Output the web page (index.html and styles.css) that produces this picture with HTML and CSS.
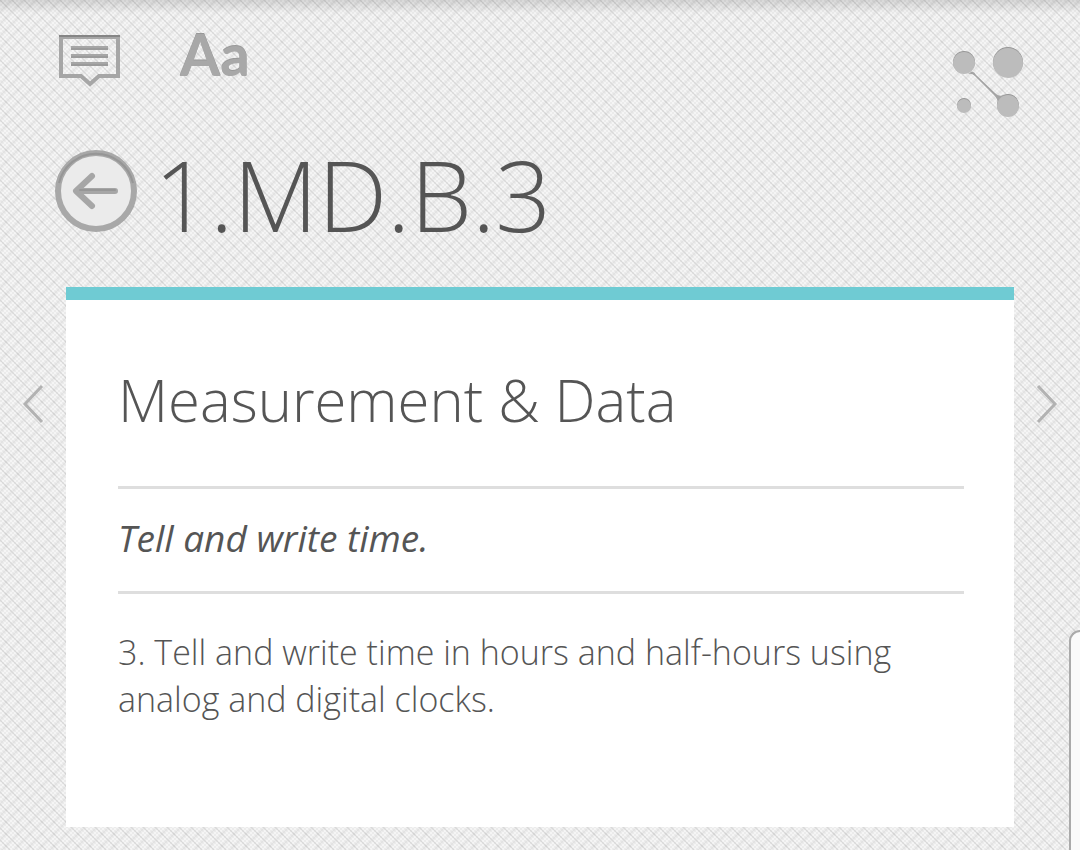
FILE: index.html
```html
<!DOCTYPE html>
<html lang="en">
<head>
  <meta charset="UTF-8">
  <meta name="viewport" content="width=device-width, initial-scale=1">
  <title>1.MD.B.3</title>
  <link rel="stylesheet" href="styles.css">
</head>
<body>
  <header class="toolbar">
    <button class="tool" aria-label="Notes">
      <svg width="62" height="54" viewBox="0 0 62 54" fill="none" stroke="#a6a6a6">
        <path d="M3 3H60V42H41L32 50L23 42H3Z" stroke-width="4"/>
        <path d="M1 2H62" stroke="#858585" stroke-width="2"/>
        <path d="M13 14H50M13 22H50M13 30H50" stroke-width="4"/>
        <path d="M13 15H50M13 23H50M13 31H50" stroke="#909090"/>
      </svg>
    </button>
    <button class="tool text-size" aria-label="Text size">Aa</button>
    <button class="tool share" aria-label="Share">
      <svg width="72" height="72" viewBox="0 0 72 72">
        <g fill="#969696">
          <circle cx="12" cy="15" r="11"/>
          <circle cx="56" cy="15" r="15"/>
          <circle cx="12" cy="58" r="7"/>
          <circle cx="56" cy="58" r="11"/>
        </g>
        <path d="M19 25Q22 24 24 28L43 46Q46 50 52 48L46 57Q46 52 42 48L23 29Q20 26 16 27Z" fill="#a4a4a4"/>
        <g fill="#bcbcbc">
          <circle cx="12" cy="16" r="11"/>
          <circle cx="56" cy="16" r="15"/>
          <circle cx="12" cy="59" r="7"/>
          <circle cx="56" cy="59" r="11"/>
        </g>
      </svg>
    </button>
  </header>

  <div class="title-row">
    <button class="back" aria-label="Back">
      <svg width="84" height="84" viewBox="0 0 84 84" fill="none">
        <circle cx="42" cy="42" r="38" fill="#ebebeb" stroke="#a8a8a8" stroke-width="6"/>
        <path d="M5 34A38 38 0 0 1 79 34" stroke="#969696" stroke-width="2"/>
        <g stroke-width="6" stroke-linecap="round" stroke-linejoin="round">
          <path d="M38 27L22 42L38 57M23 42H61" stroke="#a6a6a6"/>
          <path d="M26 41H61" stroke="#969696" stroke-width="2"/>
        </g>
      </svg>
    </button>
    <h1>1.MD.B.3</h1>
  </div>

  <main class="pager">
    <button class="arrow" aria-label="Previous">
      <svg width="22" height="40" viewBox="0 0 22 40" fill="none" stroke="#b2b2b2" stroke-width="3">
        <path d="M20 2L3 20L20 38"/>
      </svg>
    </button>
    <article class="card">
      <h2>Measurement &amp; Data</h2>
      <p class="cluster">Tell and write time.</p>
      <p class="standard">3. Tell and write time in hours and half-hours using analog and digital clocks.</p>
    </article>
    <button class="arrow" aria-label="Next">
      <svg width="22" height="40" viewBox="0 0 22 40" fill="none" stroke="#b2b2b2" stroke-width="3">
        <path d="M2 2L19 20L2 38"/>
      </svg>
    </button>
  </main>

  <aside class="drawer"></aside>
</body>
</html>
```
FILE: styles.css
```css
* {
  box-sizing: border-box;
}
body {
  margin: 0;
  min-height: 100vh;
  color: #555;
  font-family: "Open Sans", "Noto Sans", sans-serif;
  background-color: #ebebeb;
  /* top shadow, then the quilted diamond texture */
  background-image:
    linear-gradient(to bottom, rgba(0, 0, 0, 0.12), transparent),
    linear-gradient(45deg, transparent 43%, rgba(0, 0, 0, 0.08) 50%, transparent 57%),
    linear-gradient(-45deg, transparent 43%, rgba(0, 0, 0, 0.08) 50%, transparent 57%),
    conic-gradient(#f5f5f5 25%, transparent 0 50%, #f5f5f5 0 75%, transparent 0);
  background-size: 100% 14px, 12px 12px, 12px 12px, 4px 4px;
  background-repeat: no-repeat, repeat, repeat, repeat;
}
button {
  padding: 0;
  border: none;
  background: none;
  cursor: pointer;
}
svg {
  display: block;
}
.toolbar {
  display: flex;
  align-items: flex-start;
  gap: 60px;
  height: 149px;
  padding: 34px 56px 0 58px;
}
.text-size {
  font: bold 58px/40px Lato, sans-serif;
  color: #a8a8a8;
  text-shadow: 0 -1px 0 #989898;
}
.share {
  margin: 13px 0 0 auto;
}
.title-row {
  display: flex;
  align-items: flex-start;
  gap: 16px;
  height: 138px;
  padding-left: 54px;
}
h1 {
  margin: 0;
  font-size: 98px;
  font-weight: 300;
  line-height: 90px;
}
.pager {
  display: flex;
  align-items: flex-start;
}
.arrow {
  display: flex;
  justify-content: center;
  width: 66px;
  padding-top: 97px;
}
.card {
  flex: 1;
  min-height: 540px;
  padding: 68px 50px 60px 52px;
  border-top: 13px solid #6fcbd3;
  background: #fff;
}
h2 {
  margin: 0;
  padding-bottom: 54px;
  font-size: 58px;
  font-weight: 300;
  line-height: 64px;
}
.cluster {
  margin: 0;
  padding: 25px 0 29px;
  border-top: 3px solid #dedede;
  border-bottom: 3px solid #dedede;
  font-size: 37px;
  font-style: italic;
  line-height: 48px;
}
.standard {
  margin: 35px 0 0;
  font-size: 34px;
  font-weight: 300;
  line-height: 47px;
}
/* edge of the slide-out drawer */
.drawer {
  position: fixed;
  right: 0;
  bottom: 0;
  width: 11px;
  height: 220px;
  border: 2px solid #aaa;
  border-width: 2px 0 0 2px;
  border-radius: 14px 0 0 0;
  background: #fafafa;
}
```
